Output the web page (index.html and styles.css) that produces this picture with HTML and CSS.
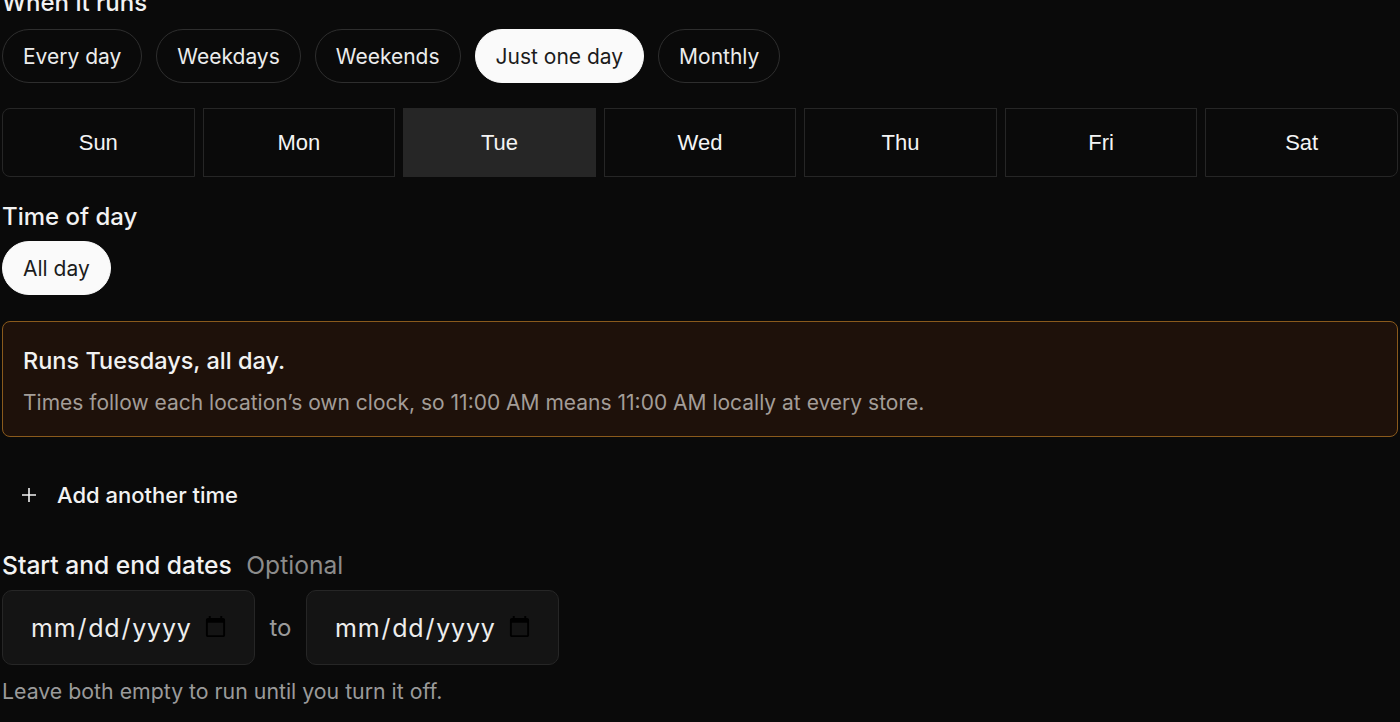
FILE: index.html
```html
<html>

<head>
    <meta charset="utf-8">
    <link rel="stylesheet" href="styles.css">
</head>

<body>
    <div class="page">
        <h3 class="label">When it runs</h3>
        <div class="pills">
            <button class="pill">Every day</button>
            <button class="pill">Weekdays</button>
            <button class="pill">Weekends</button>
            <button class="pill is-on">Just one day</button>
            <button class="pill">Monthly</button>
        </div>

        <!-- day picker, only one can be on for "Just one day" -->
        <div class="days">
            <button class="day">Sun</button>
            <button class="day">Mon</button>
            <button class="day is-on">Tue</button>
            <button class="day">Wed</button>
            <button class="day">Thu</button>
            <button class="day">Fri</button>
            <button class="day">Sat</button>
        </div>

        <h3 class="label label-time">Time of day</h3>
        <div class="pills">
            <button class="pill is-on">All day</button>
        </div>

        <div class="summary">
            <div class="summary-title">Runs Tuesdays, all day.</div>
            <div class="summary-text">Times follow each location’s own clock, so 11:00 AM means 11:00 AM locally at every store.</div>
        </div>

        <button class="add-time">
            <svg width="16" height="16" viewBox="0 0 16 16">
                <path d="M8 1v14M1 8h14" stroke="#f2f2f2" stroke-width="1.6" fill="none" />
            </svg>
            <span>Add another time</span>
        </button>

        <h3 class="label label-dates">Start and end dates <span class="muted">Optional</span></h3>
        <div class="dates">
            <input class="date" type="date">
            <span class="to">to</span>
            <input class="date" type="date">
        </div>
        <p class="hint">Leave both empty to run until you turn it off.</p>
    </div>
</body>

</html>
```

FILE: styles.css
```css
body {
    margin: 0;
    background: #0a0a0a;
    color: #f2f2f2;
    font-family: Inter, "Noto Sans", sans-serif;
}

.page {
    margin-top: -12px;
    padding: 0 2px;
}

.label {
    margin: 0;
    font-size: 24px;
    font-weight: 500;
    line-height: 30px;
}

.muted {
    margin-left: 8px;
    color: #8c8c8c;
    font-weight: 400;
}

.pills {
    display: flex;
    gap: 14px;
    margin-top: 11px;
}

.pill {
    height: 54px;
    padding: 0 20px;
    border: 1px solid #2e2e2e;
    border-radius: 27px;
    background: transparent;
    color: #ececec;
    font-family: inherit;
    font-size: 21px;
}

.pill.is-on {
    background: #fafafa;
    border-color: #fafafa;
    color: #1c1c1c;
}

.days {
    display: grid;
    grid-template-columns: repeat(7, 1fr);
    gap: 8px;
    margin-top: 25px;
}

.day {
    height: 69px;
    border: 1.5px solid #262626;
    border-radius: 0;
    background: transparent;
    color: #f4f4f4;
    font-family: "Liberation Sans", Arial, sans-serif;
    font-size: 22px;
}

.day:first-child {
    border-radius: 8px 0 0 8px;
}

.day:last-child {
    border-radius: 0 8px 8px 0;
}

.day.is-on {
    background: #262626;
    border-color: #262626;
}

.label-time {
    margin-top: 25px;
}

.label-time + .pills {
    margin-top: 9px;
}

.summary {
    margin-top: 26px;
    padding: 24px 20px 19px;
    border: 1.5px solid #8a5a1c;
    border-radius: 8px;
    background: #1e110a;
}

.summary-title {
    font-size: 23.5px;
    font-weight: 500;
    line-height: 30px;
}

.summary-text {
    margin-top: 13px;
    color: #a39d98;
    font-size: 21px;
    line-height: 28px;
}

.add-time {
    display: flex;
    align-items: center;
    gap: 20px;
    height: 50px;
    margin-top: 33px;
    padding: 0 19px;
    border: none;
    background: transparent;
    color: #f2f2f2;
    font-family: inherit;
    font-size: 22px;
    font-weight: 500;
}

.label-dates {
    margin-top: 30px;
    font-size: 24.6px;
}

.dates {
    display: flex;
    align-items: center;
    gap: 14.5px;
    margin-top: 10px;
}

.date {
    box-sizing: border-box;
    width: 253px;
    height: 75px;
    padding: 0 24px 0 27px;
    border: 1.5px solid #262626;
    border-radius: 10px;
    background: #141414;
    color: #ededed;
    color-scheme: light;
    font-family: inherit;
    font-size: 25px;
    letter-spacing: 0.8px;
}

.to {
    color: #9a9a9a;
    font-size: 24px;
}

.hint {
    margin: 13px 0 0;
    color: #9a9a9a;
    font-size: 21.3px;
}
```
